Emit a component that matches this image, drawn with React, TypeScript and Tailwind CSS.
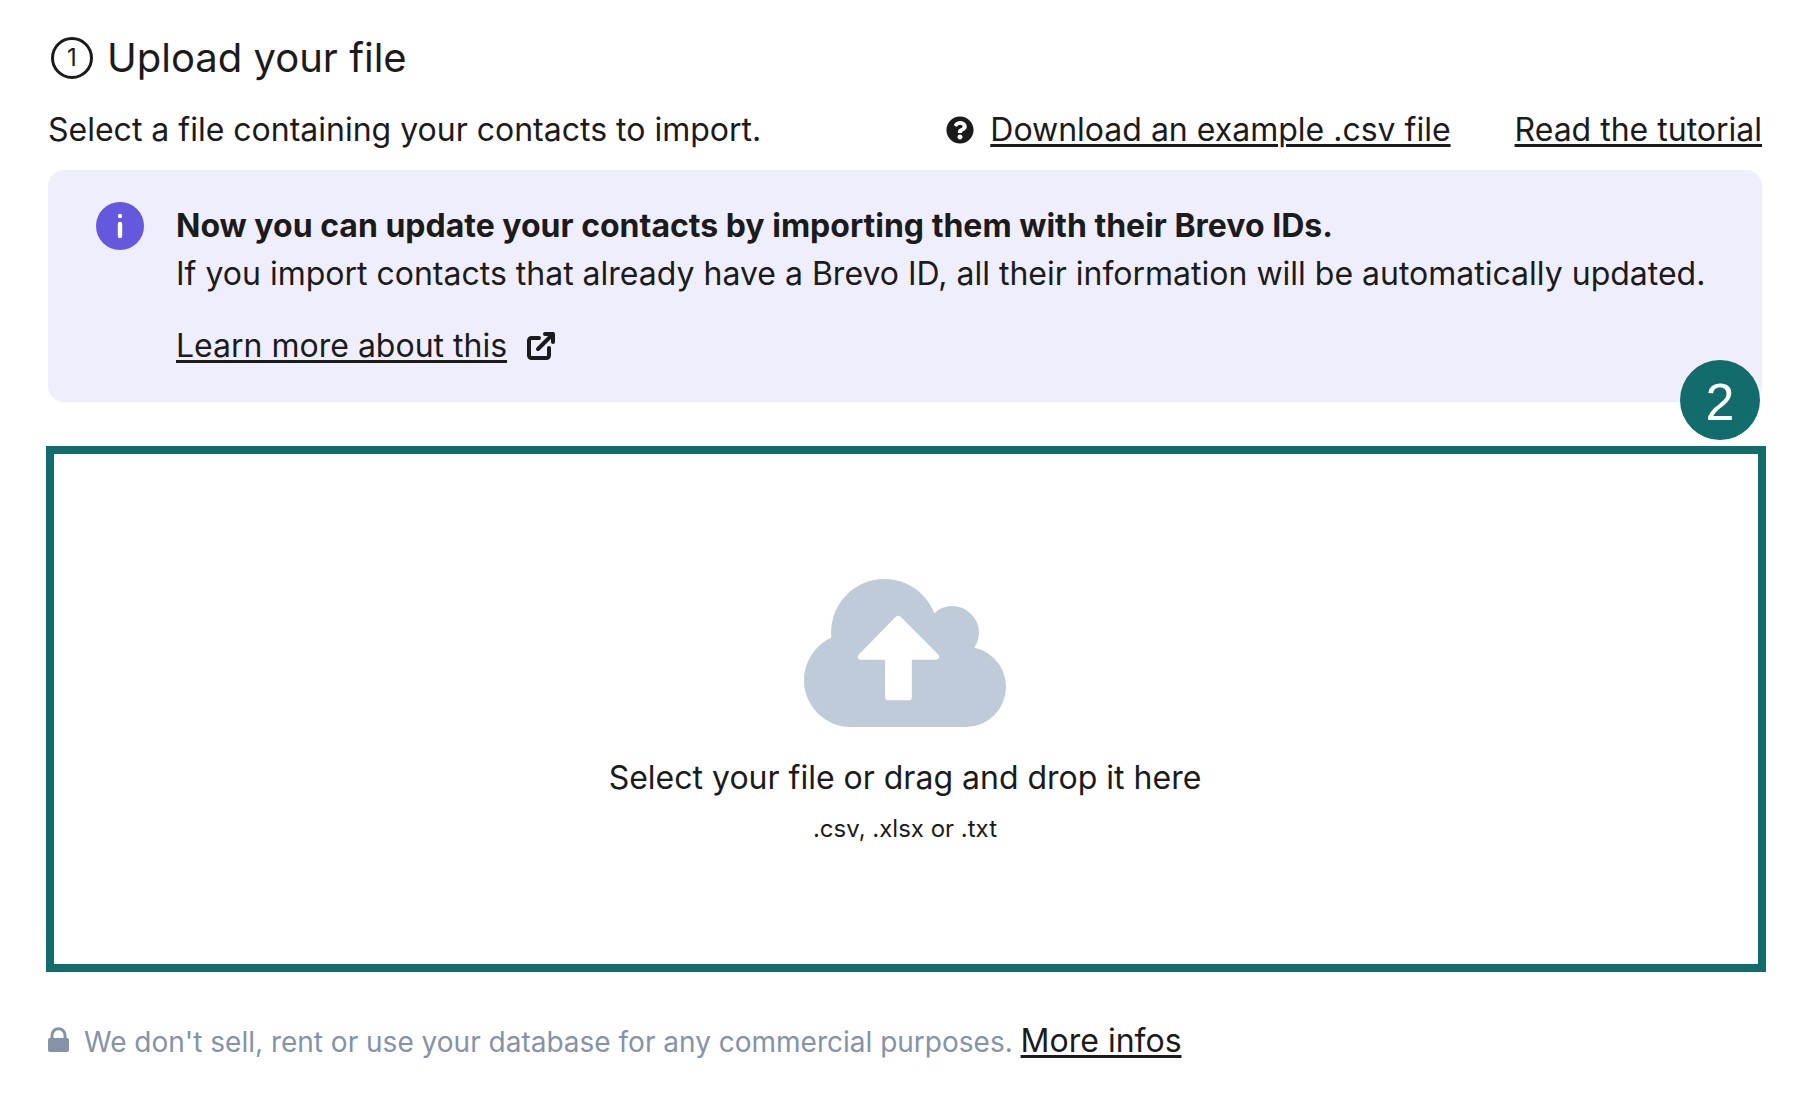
import type { ReactNode } from "react";
import { FaQuestionCircle } from "react-icons/fa";

interface TextLinkProps {
  href: string;
  children: ReactNode;
}

const TextLink = ({ href, children }: TextLinkProps) => {
  return (
    <a
      href={href}
      className="underline decoration-[3px] underline-offset-[3px] hover:no-underline"
    >
      {children}
    </a>
  );
};

const InfoIcon = () => (
  <svg viewBox="0 0 48 48" className="size-12 shrink-0" aria-hidden="true">
    <circle cx="24" cy="24" r="24" fill="#6558dc" />
    <circle cx="24" cy="14" r="2.2" fill="#fff" />
    <path d="M24 22V34" stroke="#fff" strokeWidth="4.4" strokeLinecap="round" />
  </svg>
);

const ExternalIcon = () => (
  <svg
    viewBox="0 0 28 28"
    className="size-7"
    fill="none"
    stroke="currentColor"
    strokeWidth="4"
    strokeLinecap="round"
    strokeLinejoin="round"
    aria-hidden="true"
  >
    <path d="M12 6H4.5A2.5 2.5 0 0 0 2 8.5V23.5A2.5 2.5 0 0 0 4.5 26H19.5A2.5 2.5 0 0 0 22 23.5V16" />
    <path d="M11 17L25 3" />
    <path d="M18 2H26V10" />
  </svg>
);

const CloudUploadIcon = () => (
  <svg viewBox="72 57 605 443" className="w-[202px] h-[148px]" aria-hidden="true">
    <g fill="#c0cbda">
      <circle cx="313" cy="217" r="160" />
      <circle cx="516" cy="218" r="80" />
      <circle cx="212" cy="360" r="140" />
      <circle cx="557" cy="380" r="120" />
      <rect x="212" y="217" width="345" height="283" />
    </g>
    <path
      d="M346 171Q354 163 362 171L474 283Q480 291 474 296Q471 299 466 299H395V410Q395 420 385 420H325Q315 420 315 410V299H244Q238 299 235 296Q230 290 237 282Z"
      fill="#fff"
    />
  </svg>
);

const LockIcon = () => (
  <svg viewBox="0 0 21 25" className="w-[21px] h-[25px]" aria-hidden="true">
    <path
      d="M4 12V8.2A6.5 6.5 0 0 1 17 8.2V12"
      fill="none"
      stroke="currentColor"
      strokeWidth="3"
    />
    <rect y="11" width="21" height="14" rx="2" fill="currentColor" />
  </svg>
);

const Header = () => {
  return (
    <header>
      <div className="flex items-center gap-x-3.5 pl-[3px]">
        <span className="flex size-[42px] items-center justify-center rounded-full border-3 border-[#1b1b1b] text-2xl">
          1
        </span>
        <h1 className="text-[40px] leading-[56px] font-normal">
          Upload your file
        </h1>
      </div>
      <div className="mt-5 flex justify-between">
        <p>Select a file containing your contacts to import.</p>
        <div className="flex gap-x-16">
          <span className="flex items-center gap-x-4">
            <FaQuestionCircle className="size-7" aria-hidden="true" />
            <TextLink href="#example">Download an example .csv file</TextLink>
          </span>
          <TextLink href="#tutorial">Read the tutorial</TextLink>
        </div>
      </div>
    </header>
  );
};

const Notice = () => {
  return (
    <section className="mt-4 flex gap-x-8 rounded-2xl bg-[#efeefc] px-12 py-8">
      <InfoIcon />
      <div>
        <h2 className="font-bold">
          Now you can update your contacts by importing them with their Brevo
          IDs.
        </h2>
        <p>
          If you import contacts that already have a Brevo ID, all their
          information will be automatically updated.
        </p>
        <div className="mt-6 flex items-center gap-x-5">
          <TextLink href="#brevo-id">Learn more about this</TextLink>
          <ExternalIcon />
        </div>
      </div>
    </section>
  );
};

const DropZone = () => {
  return (
    <section className="relative mt-11">
      <label className="flex cursor-pointer flex-col items-center border-8 border-[#126c6b] pt-[125px] pr-0.5 pb-[115px]">
        <input type="file" accept=".csv,.xlsx,.txt" className="sr-only" />
        <CloudUploadIcon />
        <span className="mt-[27px]">
          Select your file or drag and drop it here
        </span>
        <span className="mt-[7px] text-2xl leading-10">
          .csv, .xlsx or .txt
        </span>
      </label>
      <span className="absolute -top-[86px] right-[6px] flex size-20 items-center justify-center rounded-full bg-[#126c6b] pt-1 font-['Liberation_Sans',sans-serif] text-[52px] text-white">
        2
      </span>
    </section>
  );
};

export default function App() {
  return (
    <main className="min-h-screen bg-white pt-[30px] pr-[42px] pb-8 pl-[46px] font-[Inter,sans-serif] text-[32px] leading-[48px] text-[#1b1b1b]">
      <div className="pr-1 pl-0.5">
        <Header />
        <Notice />
      </div>
      <DropZone />
      <footer className="mt-[45px] flex items-center pl-0.5">
        <span className="flex pb-1 text-[#8592a8]">
          <LockIcon />
        </span>
        <p className="ml-[15px]">
          <span className="text-[28px] text-[#8592a8]">
            We don't sell, rent or use your database for any commercial
            purposes.{" "}
          </span>
          <TextLink href="#privacy">More infos</TextLink>
        </p>
      </footer>
    </main>
  );
}
